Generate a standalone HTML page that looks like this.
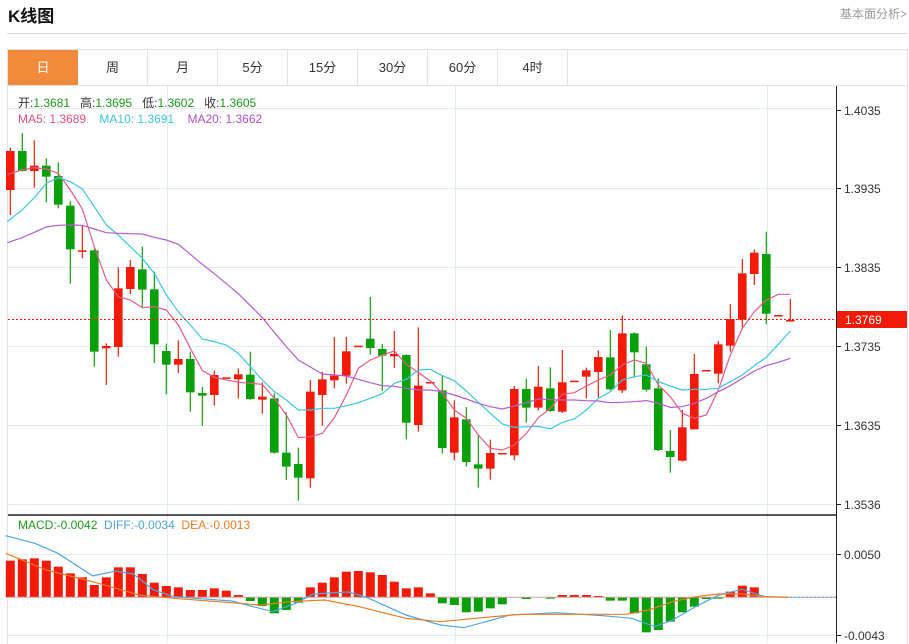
<!DOCTYPE html>
<html><head><meta charset="utf-8"><style>
body{margin:0;width:909px;height:643px;overflow:hidden;background:#fff;font-family:"Liberation Sans","Noto Sans CJK SC",sans-serif;position:relative}
.t{position:absolute;white-space:nowrap}
.tab{position:absolute;top:50px;height:35px;width:70px;line-height:35px;text-align:center;font-size:13px;color:#333;border-right:1px solid #e0e4e8;box-sizing:border-box}
</style></head><body>
<div class="t" style="left:8px;top:2px;font-size:17px;font-weight:bold;color:#111">K线图</div>
<div class="t" style="right:2px;top:5px;font-size:12px;color:#999">基本面分析&gt;</div>
<div style="position:absolute;left:7px;top:33px;width:900px;height:1px;background:#d6d6d6"></div>
<div style="position:absolute;left:7px;top:49px;width:899px;height:594px;border:1px solid #dde3e8;border-bottom:none"></div>
<div style="position:absolute;left:8px;top:85px;width:898px;height:1px;background:#dde3e8"></div>
<div class="tab" style="left:8px;background:#f28a3c;color:#fff;border:none">日</div>
<div class="tab" style="left:78px">周</div>
<div class="tab" style="left:148px">月</div>
<div class="tab" style="left:218px">5分</div>
<div class="tab" style="left:288px">15分</div>
<div class="tab" style="left:358px">30分</div>
<div class="tab" style="left:428px">60分</div>
<div class="tab" style="left:498px">4时</div>
<svg id="s" width="909" height="643" style="position:absolute;left:0;top:0"></svg>
<div class="t" style="left:18px;top:94px;font-size:12px;color:#333">开:<span style="color:#1a9c1a">1.3681</span>&nbsp;&nbsp; 高:<span style="color:#1a9c1a">1.3695</span>&nbsp;&nbsp; 低:<span style="color:#1a9c1a">1.3602</span>&nbsp;&nbsp; 收:<span style="color:#1a9c1a">1.3605</span></div>
<div class="t" style="left:18px;top:112px;font-size:12px"><span style="color:#e8507a">MA5: 1.3689</span>&nbsp;&nbsp;&nbsp; <span style="color:#3cc4dd">MA10: 1.3691</span>&nbsp;&nbsp;&nbsp; <span style="color:#b150c5">MA20: 1.3662</span></div>
<div class="t" style="left:18px;top:518px;font-size:12px"><span style="color:#1a9c1a">MACD:-0.0042</span>&nbsp; <span style="color:#4da6e8">DIFF:-0.0034</span>&nbsp; <span style="color:#f07a20">DEA:-0.0013</span></div>
<script>
var S=document.getElementById('s'),h='';
function L(x1,y1,x2,y2,c,w,d){h+='<line x1="'+x1+'" y1="'+y1+'" x2="'+x2+'" y2="'+y2+'" stroke="'+c+'" stroke-width="'+(w||1)+'"'+(d?' stroke-dasharray="'+d+'"':'')+'/>';}
[108,188,267,346,425,504,554,635].forEach(function(y){L(8,y+.5,836,y+.5,'#e3eaf0');});
[167,455,767].forEach(function(x){L(x+.5,86,x+.5,643,'#e3eaf0');});
L(836.5,86,836.5,643,'#222');
L(8,515,836,515,'#222',1.5);
var lab=[[110,'1.4035'],[188,'1.3935'],[267,'1.3835'],[346,'1.3735'],[425,'1.3635'],[504,'1.3536'],[554,'0.0050'],[635,'-0.0043']];
lab.forEach(function(a){L(836,a[0]+.5,841,a[0]+.5,'#222');h+='<text x="844" y="'+(a[0]+5)+'" font-size="12" fill="#333" font-family="Liberation Sans">'+a[1]+'</text>';});
var C=[['r',78,195,68,270],['g',78,138,24,140],['r',122,138,46,188],['g',122,155,100,232],['g',153,239,112,250],['g',242,373,228,476],['r',376,380,300,400],['g',376,680,370,725],['r',663,670,655,780],['r',490,666,427,695],['r',426,492,405,508],['g',433,494,365,547],['g',493,658,440,714],['g',678,719,656,808],['r',702,719,646,744],['g',702,802,680,860],['g',804,812,786,902],['r',750,810,737,842],['r',757,759,757,759],['r',748,763,730,820],['g',749,822,680,825],['r',815,824,772,866],['g',820,983,805,986],['g',983,1025,862,1065],['g',1017,1058,968,1127],['r',800,1060,765,1088],['r',763,810,740,902],['r',752,766,636,790],['r',679,752,636,776],['r',662,665,662,665],['g',641,669,516,688],['g',672,692,657,797],['r',687,694,618,729],['g',690,893,688,943],['r',782,900,607,920],['r',771,773,771,773],['g',796,969,750,985],['r',877,983,826,1006],['g',883,1011,846,1025],['g',1018,1031,930,1088],['r',984,1031,944,1064],['r',984,986,984,986],['r',792,991,783,1006],['g',792,848,761,893],['r',785,848,723,857],['g',790,858,727,860],['r',772,860,675,864],['r',767,769,767,769],['r',736,755,728,820],['r',696,741,676,818],['g',697,793,615,796],['r',625,796,571,804],['g',625,682,622,758],['g',718,794,665,800],['g',790,975,760,978],['g',978,996,915,1043],['r',907,1007,855,1010],['r',747,913,687,913],['r',735,737,735,737],['r',658,746,648,775],['r',582,662,537,680],['r',445,584,402,608],['r',383,447,373,480],['g',387,566,320,598],['r',570,572,570,572],['r',585,587,522,590]];
function Y(z){return 125+z/3;}
C.forEach(function(c,i){var x=10.3+12*i,col=c[0]=='r'?'#f21a08':'#0aa00a';
L(x,Y(c[3]),x,Y(c[4]),col,1.2);var t=Y(c[1]),b=Y(c[2]);if(b-t<1.5)b=t+1.5;
h+='<rect x="'+(x-4.3)+'" y="'+t+'" width="8.6" height="'+(b-t)+'" fill="'+col+'"/>';});
function P(a,b,col,fx,fy){var s='';a.forEach(function(p){s+=fx(p[0])+','+fy(p[1])+' ';});b.forEach(function(p){s+=(410+p[0]/3)+','+fy(p[1])+' ';});h+='<polyline points="'+s+'" fill="none" stroke="'+col+'" stroke-width="1.2"/>';}
var f4=function(x){return x/3;};
P([[22,148],[66,135],[103,128],[139,132],[175,145],[211,195],[247,252],[283,365],[319,465],[355,515],[391,525],[427,548],[463,545],[499,555],[535,600],[571,670],[607,737],[643,757],[679,765],[715,772],[751,775],[787,778],[823,820],[859,870],[895,938],[931,935],[967,925],[1003,878],[1039,810],[1075,730],[1111,705],[1147,690],[1183,678],[1219,718]],[[25,743],[61,768],[97,805],[133,855],[169,880],[205,930],[241,970],[277,975],[313,960],[349,925],[385,878],[421,850],[457,808],[493,803],[529,783],[565,765],[601,750],[637,720],[673,705],[709,715],[745,780],[781,815],[817,865],[853,880],[889,870],[925,795],[961,690],[997,610],[1033,560],[1069,525],[1105,508],[1141,508]],'#ec5a86',f4,Y);
P([[22,290],[66,255],[103,218],[139,175],[175,158],[211,170],[247,192],[283,245],[319,300],[355,330],[391,365],[427,400],[463,445],[499,510],[535,560],[571,600],[607,642],[643,650],[679,660],[715,685],[751,725],[787,765],[823,800],[859,825],[895,855],[931,855],[967,850],[1003,850],[1039,842],[1075,833],[1111,820],[1147,806],[1183,775],[1219,763]],[[25,735],[61,733],[97,752],[133,767],[169,798],[205,832],[241,865],[277,897],[313,907],[349,905],[385,904],[421,912],[457,892],[493,882],[529,855],[565,820],[601,800],[637,765],[673,755],[709,750],[745,770],[781,783],[817,795],[853,793],[889,793],[925,790],[961,770],[997,750],[1033,722],[1069,697],[1105,658],[1141,618]],'#3cc8e0',f4,Y);
P([[22,353],[66,338],[103,322],[139,306],[175,301],[211,300],[247,301],[283,312],[319,323],[355,325],[391,326],[427,327],[463,337],[499,345],[535,358],[571,388],[607,418],[643,446],[679,476],[715,506],[751,542],[787,578],[823,622],[859,665],[895,705],[931,726],[967,747],[1003,750],[1039,753],[1075,763],[1111,773],[1147,782],[1183,784],[1219,790]],[[25,795],[61,795],[97,800],[133,810],[169,822],[205,835],[241,845],[277,852],[313,843],[349,833],[385,822],[421,824],[457,825],[493,825],[529,827],[565,828],[601,833],[637,832],[673,830],[709,827],[745,835],[781,847],[817,845],[853,835],[889,820],[925,800],[961,782],[997,760],[1033,738],[1069,722],[1105,712],[1141,700]],'#b65ccc',f4,Y);
L(8,319.5,836,319.5,'#f21a08',1,'2,2');
h+='<rect x="837" y="311" width="70" height="17" fill="#f21a08"/><text x="845" y="324" font-size="12" fill="#fff" font-family="Liberation Sans">1.3769</text>';
var z0=597.3,M=[182,178,175,182,200,220,232,255,232,202,202,222,248,258,262,270,270,265,272,285,303,318,340,330,308,262,248,232,215,213,217,225,245,265,262,280,310,315,337,335,325,313,293,297,293,296,285,285,285,288,302,302,340,397,390,365,337,320,297,296,275,257,262,290,292,292];
M.forEach(function(v,i){var x=10.3+12*i,y=500+v/3,col=v<292?'#f21a08':'#0aa00a';var t=Math.min(y,z0),b=Math.max(y,z0);if(b-t<0.6)return;
h+='<rect x="'+(x-4.5)+'" y="'+t+'" width="9" height="'+(b-t)+'" fill="'+col+'"/>';});
L(8,z0,836,z0,'#c8a0a0',1);
function Q(a,col){var s='';a.forEach(function(p){s+=(p[0]/1.725)+','+(500+p[1]/3)+' ';});h+='<polyline points="'+s+'" fill="none" stroke="'+col+'" stroke-width="1.2"/>';}
Q([[10,107],[60,130],[100,160],[160,228],[200,213],[230,222],[265,270],[300,290],[400,303],[470,335],[510,310],[540,282],[600,276],[630,290],[700,345],[760,375],[800,383],[880,345],[960,338],[1040,347],[1090,355],[1130,380],[1160,360],[1200,320],[1240,285],[1280,268],[1320,290],[1360,292]],'#4da6e8');
Q([[10,160],[80,210],[160,245],[240,285],[300,295],[450,315],[500,305],[560,300],[620,320],[700,355],[760,365],[850,350],[900,343],[1000,343],[1080,343],[1120,330],[1160,305],[1200,290],[1240,282],[1280,282],[1320,290],[1360,292]],'#f07a20');
L(790,z0,836,z0,'#4da6e8',1,'2,2');
S.innerHTML=h;
</script>
</body></html>
